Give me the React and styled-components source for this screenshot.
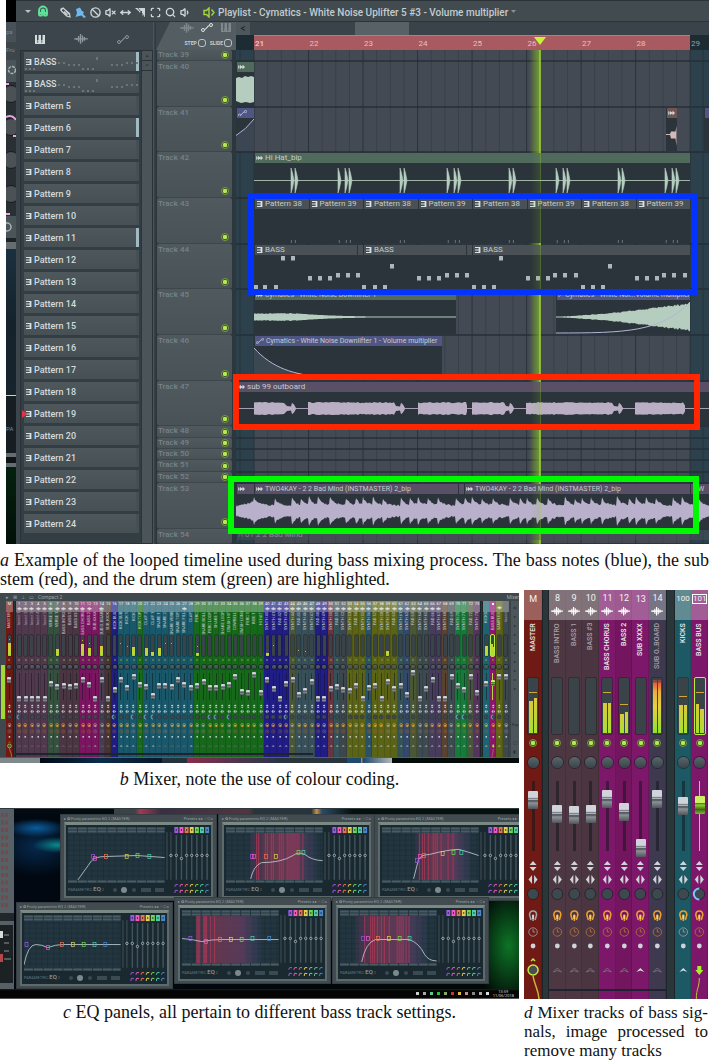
import React from "react";
import styled, { createGlobalStyle } from "styled-components";
import {
  Magnet,
  Ban,
  VolumeX,
  MoveHorizontal,
  Scan,
  Search,
  Volume1,
} from "lucide-react";

const GlobalStyle = createGlobalStyle`
  * { box-sizing: border-box; }
  body { margin: 0; background: #fff; overflow-x: hidden; }
  button, input { margin: 0; padding: 0; border: 0; background: none; font: inherit; color: inherit; }
  svg { display: block; }
  figure { margin: 0; }
`;

const Page = styled.main`
  font-family: Roboto, "Liberation Sans", sans-serif;
  color: #d5dde0;
`;

const Caption = styled.figcaption`
  font-family: "Liberation Serif", serif;
  font-size: ${(p) => p.$size || 18}px;
  line-height: ${(p) => p.$line || 19}px;
  color: #111;
  margin-top: ${(p) => p.$top}px;
  text-align: ${(p) => (p.$center ? "center" : "left")};
`;

const Line = styled.span`
  display: block;
  white-space: nowrap;
  text-align-last: ${(p) => (p.$fill ? "justify" : "left")};
`;

/* ---------- playlist ---------- */

const Playlist = styled.div`
  display: grid;
  grid-template-columns: 10px 1fr;
  height: 544px;
  margin-left: 6px;
  overflow: hidden;
`;

const Sliver = styled.div`
  display: flex;
  flex-direction: column;
  background: #14202a;
  overflow: hidden;
  font-size: 6px;
  color: #7d878c;
`;

const SliverBlock = styled.div`
  flex: 0 0 auto;
  height: ${(p) => p.$h}px;
  background: ${(p) => p.$bg};
  padding: ${(p) => p.$pad || 0}px 0 0;
  overflow: hidden;
`;

const Window = styled.section`
  display: flex;
  flex-direction: column;
  min-width: 0;
  background: #3b454b;
`;

const Toolbar = styled.header`
  display: flex;
  align-items: center;
  height: 22px;
  padding: 2px 0 0 4px;
  background: #414b50;
  border-top: 1px solid #2b3338;
  border-bottom: 1px solid #2b3439;
  white-space: nowrap;
`;

const ToolButton = styled.button`
  display: flex;
  align-items: center;
  justify-content: center;
  width: 15px;
  height: 15px;
  color: ${(p) => p.$color || "#cfd6d8"};
  margin-left: ${(p) => p.$gap || 0}px;
`;

const WindowTitle = styled.h1`
  margin: 0 3px 0 2px;
  font-size: 10px;
  font-weight: 500;
  color: #c3cccf;
`;

const Body = styled.div`
  flex: 1;
  display: grid;
  grid-template-columns: 137px 3px 80px 1fr;
  min-height: 0;
`;

const Browser = styled.aside`
  display: flex;
  flex-direction: column;
  padding-left: 4px;
  min-height: 0;
`;

const BrowserTabs = styled.div`
  display: flex;
  align-items: center;
  justify-content: space-around;
  height: 28px;
  padding: 6px 10px 0 0;
`;

const BrowserBody = styled.div`
  display: grid;
  grid-template-columns: 1fr 11px;
  background: #333d44;
  border: 1px solid #2a3238;
  height: 494px;
`;

const PatternList = styled.ul`
  list-style: none;
  margin: 0;
  padding: 1px 2px 0 3px;
  display: flex;
  flex-direction: column;
  gap: 3px;
  overflow: hidden;
`;

const PatternItem = styled.li`
  flex: 0 0 19px;
  display: flex;
  align-items: center;
  position: relative;
  gap: 2px;
  padding-left: 1px;
  font-size: 9px;
  font-weight: 500;
  color: #d3dbde;
  background: linear-gradient(#4d575c, #465055);
  border-right: 3px solid ${(p) => (p.$marked ? "#a3b9c2" : "#454f54")};
`;

const MiniNotes = styled.svg`
  position: absolute;
  inset: 0;
`;

const Current = styled.span`
  position: absolute;
  left: -2px;
  top: 6px;
  border-left: 5px solid #e0334a;
  border-top: 4px solid transparent;
  border-bottom: 4px solid transparent;
`;

const Scroll = styled.div`
  background: #4a5459;
  border-left: 1px solid #2b3439;
  display: flex;
  flex-direction: column;
`;

const ScrollButton = styled.button`
  height: 10px;
  font-size: 6px;
  line-height: 8px;
  color: #1f272b;
  border-bottom: 1px solid #2b3439;
`;

const Divider = styled.div`
  background: linear-gradient(90deg, #4a5459 33%, #252e34 66%, #3b454b);
`;

const Heads = styled.div`
  display: flex;
  flex-direction: column;
  background: #2b363d;
  min-height: 0;
`;

const HeadTop = styled.div`
  background: #3b454b;
`;

const HeadTools = styled.div`
  height: 28px;
  background: #535d62;
  clip-path: polygon(0 100%, 14px 0, 100% 0, 100% 100%);
  display: flex;
  flex-direction: column;
  justify-content: space-between;
  align-items: flex-end;
  padding: 1px 4px 3px 0;
`;

const IconRow = styled.div`
  display: flex;
  gap: 7px;
`;

const Toggle = styled.label`
  display: flex;
  align-items: center;
  gap: 1px;
  font-size: 5px;
  font-weight: 700;
  color: #c7cfd2;
  input {
    appearance: none;
    width: 8px;
    height: 8px;
    border: 1px solid #b9c2c6;
    border-radius: 3px;
  }
`;

const ToggleRow = styled.div`
  display: flex;
  gap: 4px;
`;

const TrackHead = styled.div`
  flex: 0 0 auto;
  display: flex;
  justify-content: space-between;
  height: ${(p) => p.$h}px;
  margin: 0 4px 0 1px;
  padding: ${(p) => (p.$h > 14 ? 1 : 0)}px 3px ${(p) => (p.$h > 14 ? 2 : 1)}px 1px;
  background: linear-gradient(#50595e, #485257);
  border-bottom: 1px solid #3c464b;
  border-radius: 2px;
  color: #798286;
  font-size: 8px;
  font-weight: 500;
  line-height: 10px;
`;

const Led = styled.button`
  align-self: ${(p) => p.$align || "flex-end"};
  width: ${(p) => p.$size || 8}px;
  height: ${(p) => p.$size || 8}px;
  border-radius: 50%;
  border: 1px solid #7a9a3c;
  background: radial-gradient(#b4e85a 45%, #3a5020 60%);
`;

const Timeline = styled.div`
  display: flex;
  flex-direction: column;
  min-width: 0;
`;

const TimeScroll = styled.div`
  display: grid;
  grid-template-columns: 14fr 105fr 54fr 300fr;
  height: 13px;
  background: #3a4349;
`;

const TimeBack = styled.button`
  background: #4d575c;
  font-size: 10px;
  line-height: 10px;
  color: #1e2529;
`;

const TimeThumb = styled.div`
  grid-column: 3;
  background: #576166;
`;

const Ruler = styled.div`
  display: grid;
  grid-template-columns: 36fr repeat(8, minmax(0, 109fr)) minmax(0, 38fr);
  height: 15px;
  background: #1d2b33;
  font-size: 8px;
  line-height: 15px;
  position: relative;
`;

const RulerBar = styled.span`
  background: ${(p) => (p.$last ? "none" : "#a95a60")};
  border-top: 1px solid ${(p) => (p.$last ? "#1d2b33" : "#c0777a")};
  color: ${(p) => (p.$last ? "#93a0a6" : "#e3c0c0")};
  padding-left: 1px;
  &:nth-child(2) { font-weight: 700; }
`;

const Marker = styled.span`
  position: absolute;
  left: 63%;
  top: 2px;
  border-top: 8px solid #c4f43c;
  border-left: 6px solid transparent;
  border-right: 6px solid transparent;
`;

const Lanes = styled.div`
  position: relative;
  display: flex;
  flex-direction: column;
`;

const Backdrop = styled.svg`
  position: absolute;
  inset: 0;
  width: 100%;
  height: 100%;
`;

const Playhead = styled.div`
  position: absolute;
  top: 0;
  bottom: 0;
  right: 35.6%;
  width: 10px;
  background: linear-gradient(90deg, transparent, rgba(130, 190, 30, 0.16));
  border-right: 1px solid rgba(160, 220, 40, 0.3);
`;

const Lane = styled.div`
  flex: 0 0 auto;
  position: relative;
  height: ${(p) => p.$h}px;
  display: grid;
  grid-template-columns: ${(p) => p.$cols || "1fr"};
  padding: 1px 0;
`;

const Clip = styled.div`
  grid-column: ${(p) => p.$col};
  display: flex;
  flex-direction: column;
  min-width: 0;
  overflow: hidden;
  background: ${(p) => (p.$ghost ? "none" : "#2b343a")};
`;

const tones = {
  green: "#506a5c",
  blue: "#505684",
  plum: "#594f66",
  grey: "#4a5156",
  brown: "#715553",
};

const ClipBar = styled.div`
  flex: 0 0 10px;
  display: flex;
  align-items: center;
  gap: 2px;
  min-width: 0;
  height: 10px;
  padding-left: 1px;
  background: ${(p) => tones[p.$tone]};
  border-left: 1px solid #2b343a;
  font-size: ${(p) => (p.$small ? 7 : 8)}px;
  line-height: 10px;
  white-space: nowrap;
  color: #c3cdcb;
`;

const ClipArt = styled.svg`
  width: 100%;
  flex: 1;
  min-height: 0;
`;

const Highlight = styled.div`
  position: absolute;
  border: 6px solid ${(p) => p.$color};
  left: ${(p) => p.$left}px;
  right: ${(p) => p.$right}px;
  top: ${(p) => p.$top}px;
  height: ${(p) => p.$h}px;
  z-index: 3;
`;

const PatternIcon = () => (
  <svg width="7" height="8" viewBox="0 0 7 8" stroke="#d9e2e5" fill="none">
    <path d="M1 1.500H6M1 4H6M1 6.500H6" strokeWidth="1.100" />
    <path d="M5.500 1V7" strokeWidth="1.800" />
  </svg>
);

const PianoIcon = ({ color = "#d5dcdf" }) => (
  <svg width="12" height="9" viewBox="0 0 12 9">
    <path d="M1 0H3V5H4.500V0H7V5H8.500V0H11V9H1Z" fill={color} />
    <path d="M3.700 5V8M7.800 5V8" stroke="#3b454b" strokeWidth="0.7" />
  </svg>
);

const WaveIcon = ({ color = "#8d969a", size = 14 }) => (
  <svg width={size} height={size * 0.7} viewBox="0 0 14 10">
    <path d="M0 5H14M2.500 4V6M4.500 2V8M6.500 0V10M8.500 1.500V8.500M10.500 3V7" stroke={color} strokeWidth="1.4" />
  </svg>
);

const CurveIcon = ({ color = "#8d969a", width = 12 }) => (
  <svg width={width} height={width * 0.75} viewBox="0 0 12 9" fill="none" stroke={color}>
    <circle cx="2" cy="7" r="1.500" />
    <circle cx="10" cy="2" r="1.500" />
    <path d="M3.500 6.500C6 6 6 3 8.500 2.500" strokeWidth="1.2" />
  </svg>
);

const AudioIcon = () => (
  <svg width="7" height="6" viewBox="0 0 8 6">
    <path d="M0.500 1V5M2.500 1.200L4.500 3L2.500 4.800ZM5.500 1.200L7.500 3L5.500 4.800ZM0.500 3H7" stroke="#d9e2e5" strokeWidth="0.8" fill="#d9e2e5" />
  </svg>
);

const PencilTool = () => (
  <svg width="11" height="11" viewBox="0 0 11 11" fill="none" stroke="#cfd6d8" strokeWidth="1.2">
    <path d="M1 2L3 1L9.500 6.500L10 10L6.500 9L1 3.500ZM3 1L1 3.500M4 4.500L7.500 8M5.500 3.500L9 7" />
  </svg>
);

const BrushTool = () => (
  <svg width="11" height="11" viewBox="0 0 11 11">
    <path d="M1 2L5 0.500L7 4L9 5L8 7L11 10L9 11L6.500 8.500L4 9L0.500 10L2 6Z" fill="#6cb8f0" />
  </svg>
);

const SliceTool = () => (
  <svg width="11" height="11" viewBox="0 0 11 11">
    <path d="M0 1H10V10L7 8V4H6L5 6L4 4.500Z" fill="#cfd6d8" />
    <path d="M3 1L9 9" stroke="#414b50" strokeWidth="0.8" />
  </svg>
);

const SpeakerTool = () => (
  <svg width="12" height="11" viewBox="0 0 12 11" fill="none" stroke="#a4d83a" strokeWidth="1.400">
    <path d="M1 3.500H3.500L6 1V10L3.500 7.500H1ZM8.500 2.500L11 5.500L8.500 8.500" />
  </svg>
);

const LucideTool = ({ icon: Icon }) => <Icon size={11} strokeWidth={3} />;

const tools = [
  ["Draw", <PencilTool />],
  ["Paint", <BrushTool />],
  ["Delete", <LucideTool icon={Ban} />],
  ["Mute", <LucideTool icon={VolumeX} />],
  ["Slip", <LucideTool icon={MoveHorizontal} />],
  ["Slice", <SliceTool />],
  ["Select", <LucideTool icon={Scan} />],
  ["Zoom", <LucideTool icon={Search} />],
  ["Playback", <LucideTool icon={Volume1} />],
];

const patterns = ["BASS", "BASS"];
for (let n = 5; n <= 24; n++) patterns.push(`Pattern ${n}`);
const marked = [0, 3, 8];

const tracks = [
  [39, 11], [40, 46], [41, 45], [42, 46], [43, 46], [44, 45], [45, 46], [46, 46], [47, 45],
  [48, 12], [49, 11], [50, 11], [51, 12], [52, 11], [53, 46], [54, 15],
];

// turns a list of amplitudes into a mirrored outline
const outline = (points, mid) => {
  const top = points.map(([x, a]) => `${x} ${(mid - a).toFixed(1)}`);
  const bottom = points.map(([x, a]) => `${x} ${(mid + a).toFixed(1)}`).reverse();
  return `M${top.concat(bottom).join("L")}Z`;
};

const noise = (i) => Math.abs(Math.sin(i * 12.9898) * 43758.5453) % 1;

const hats = [0, 109, 218, 327].flatMap((b) => [37, 41, 84, 91, 95].map((x) => x + b));

const subBlocks = [[18, 49, 60], [72, 158, 169], [182, 230, 230], [236, 268, 278], [290, 376, 387], [399, 448, 448]];
const subPath = subBlocks
  .map(([a, b, tail]) => {
    const pts = [];
    for (let x = a; x <= b; x += 2) pts.push([x, 5.5 + noise(x) * 1.3]);
    if (tail > b) pts.push([b + 2, 2.5], [tail - 5, 2], [tail - 4, 6], [tail - 2, 4], [tail, 0.5]);
    else pts.push([b + 1, 3]);
    return outline(pts, 17);
  })
  .join("");

const kicks = [
  18, 39, 56, 65, 73, 82, 94, 110, 120, 127, 137, 147, 165, 174, 182, 192, 202, 220, 229, 236, 246,
  257, 274, 284, 291, 301, 312, 329, 339, 346, 355, 366, 381, 393, 400, 410, 420, 437, 446, 462,
];
const drumPoints = [];
for (let x = 0; x <= 473; x++) {
  const last = kicks.filter((k) => k <= x).pop();
  if (last === undefined) {
    drumPoints.push([x, 4 + x / 4 + noise(x) * 2]);
  } else {
    const since = x - last;
    const big = 12 + noise(last) * 3;
    drumPoints.push([x, since < 1 ? big : 3 + noise(x) * 2 + (big * 0.7) / (1 + since * 0.3)]);
  }
}

const notes = [
  [2, 42], [11, 42], [22, 42], [29, 13], [39, 13], [56, 33], [66, 33], [76, 33], [84, 30], [94, 30], [104, 30],
  [110, 42], [121, 42], [131, 42], [138, 21], [165, 33], [175, 33], [185, 33], [193, 30], [203, 30], [213, 30],
  [220, 42], [230, 42], [240, 42], [247, 13], [274, 33], [284, 33], [294, 33], [301, 30], [311, 30], [322, 30],
  [329, 42], [339, 42], [349, 42], [356, 21], [383, 33], [393, 33], [403, 33], [410, 30], [420, 30], [431, 30],
];

const swell = [];
for (let x = 0; x <= 134; x += 1) swell.push([x, 0.4 + Math.pow(x / 134, 1.5) * 12 + noise(x) * (x / 60)]);
const fall = [];
for (let x = 0; x <= 202; x += 1) {
  const a = x < 45 ? 3 + noise(x) : Math.max(0.4, 3.4 * Math.exp(-(x - 45) / 40));
  fall.push([x, a]);
}

const laneLines = [];
tracks.reduce((y, [, h]) => {
  laneLines.push(y + h);
  return y + h;
}, 0);

const Art = ({ w, h, children }) => (
  <ClipArt viewBox={`0 0 ${w} ${h}`} preserveAspectRatio="none">
    {children}
  </ClipArt>
);

const BackdropArt = () => (
  <Backdrop viewBox="0 0 473 494" preserveAspectRatio="none">
    <defs>
      <linearGradient id="glow">
        <stop offset="0" stopColor="#8ac020" stopOpacity="0" />
        <stop offset="1" stopColor="#8ac020" stopOpacity="0.65" />
      </linearGradient>
    </defs>
    <rect width="473" height="494" fill="#2c414c" />
    <rect x="18" width="436" height="494" fill="#434a54" />
    {[...Array(33)].map((_, i) => (
      <path
        key={i}
        d={`M${18 + i * 13.63} 0V494`}
        stroke={i % 4 === 0 ? "#2a333c" : "#384049"}
        strokeWidth="1"
      />
    ))}
    <path d="M4 0V494M467 0V494" stroke="#24363f" />
    {laneLines.map((y) => (
      <path key={y} d={`M0 ${y}H473`} stroke="#262f37" strokeWidth="1.3" />
    ))}
    <rect x="293" width="11" height="494" fill="url(#glow)" />
    <path d="M304 0V494" stroke="#a8e03c" strokeWidth="1.3" />
  </Backdrop>
);

const laneContent = {
  40: {
    cols: "18fr 455fr",
    body: (
      <Clip>
        <ClipBar $tone="green"><AudioIcon /></ClipBar>
        <Art w={18} h={34}><path d="M0 6L3 5L6 6L9 4L12 5L15 4L18 5V30L14 31L10 30L5 31L0 29Z" fill="#b4cdbf" /></Art>
      </Clip>
    ),
  },
  41: {
    cols: "18fr 412fr 11fr 27fr 5fr",
    body: (
      <>
        <Clip>
          <ClipBar $tone="blue"><CurveIcon color="#c9cdea" width={9} /></ClipBar>
          <Art w={18} h={34}><path d="M0 18Q10 12 18 1V34H0Z" fill="#3b4652" /><path d="M0 18Q10 12 18 1" stroke="#b2b6d8" fill="none" /></Art>
        </Clip>
        <Clip $col={3}>
          <ClipBar $tone="brown"><AudioIcon /></ClipBar>
          <Art w={11} h={34}><path d="M0 16.500H4L5 14H9.500L10.500 8V29L9.500 21H5L4 17.500H0Z" fill="#d3bab8" /></Art>
        </Clip>
        <Clip $col={5}><ClipBar $tone="blue" /></Clip>
      </>
    ),
  },
  42: {
    cols: "18fr 436fr 19fr",
    body: (
      <Clip $col={2}>
        <ClipBar $tone="green"><AudioIcon />Hi Hat_bip</ClipBar>
        <Art w={436} h={34}>
          <path d="M0 17.500H436" stroke="#9fb5a8" />
          {hats.map((x) => (
            <path key={x} d={`M${x} 5L${x + 1.5} 10L${x + 3} 17.500L${x + 1.5} 25L${x} 30Z`} fill="#b4cdbf" stroke="#b4cdbf" strokeWidth="0.6" />
          ))}
        </Art>
      </Clip>
    ),
  },
  43: {
    cols: "36fr repeat(8, minmax(0, 109fr)) 38fr",
    body: [...Array(8)].map((_, i) => (
      <Clip key={i} $col={i + 2}>
        <ClipBar $tone="grey"><PatternIcon />Pattern {i % 2 ? 39 : 38}</ClipBar>
        <Art w={54} h={34}><path d={i % 2 ? "M30 31V34M37 31V34M41 31V34" : "M37 31V34M41 31V34"} stroke="#68727a" /></Art>
      </Clip>
    )),
  },
  45: {
    cols: "18fr 202fr 100fr 134fr 19fr",
    body: (
      <>
        <Clip $col={2}>
          <ClipBar $tone="green" $small><AudioIcon />Cymatics - White Noise Downlifter 1</ClipBar>
          <Art w={202} h={34}><path d={outline(fall, 17)} fill="#b4cdbf" /></Art>
        </Clip>
        <Clip $col={4}>
          <ClipBar $tone="blue" $small><CurveIcon color="#c9cdea" width={6} />Cymatics - White Noi...Volume multiplier</ClipBar>
          <Art w={134} h={34}>
            <path d={outline(swell, 17)} fill="#b4cdbf" />
            <path d="M0 33C70 33 105 32 134 2" stroke="#b2b6d8" fill="none" />
          </Art>
        </Clip>
      </>
    ),
  },
  46: {
    cols: "18fr 188fr 267fr",
    body: (
      <Clip $col={2}>
        <ClipBar $tone="blue" $small><CurveIcon color="#c9cdea" width={8} />Cymatics - White Noise Downlifter 1 - Volume multiplier</ClipBar>
        <Art w={188} h={34}>
          <path d="M0 2C18 22 40 29 70 31H0Z" fill="#3b4852" />
          <path d="M0 2C18 22 40 29 70 31" stroke="#b2b6d8" fill="none" />
        </Art>
      </Clip>
    ),
  },
  47: {
    cols: "1fr",
    body: (
      <Clip>
        <ClipBar $tone="plum"><AudioIcon />sub 99 outboard</ClipBar>
        <Art w={473} h={34}>
          <path d="M0 17H473" stroke="#a99fb5" />
          <path d={subPath} fill="#b9aec4" />
        </Art>
      </Clip>
    ),
  },
};

const BassLane = styled.div`
  grid-column: 2;
  display: flex;
  flex-direction: column;
  background: #2b343a;
`;

const BarRow = styled.div`
  display: grid;
  grid-template-columns: ${(p) => p.$cols};
`;

const LaneFor = ({ id, h }) => {
  if (id === 44) {
    return (
      <Lane $h={h} $cols="18fr 436fr 19fr">
        <BassLane>
          <BarRow $cols="103fr 6fr 103fr 6fr 218fr">
            <ClipBar $tone="grey"><PatternIcon />BASS</ClipBar>
            <ClipBar $tone="grey" />
            <ClipBar $tone="grey"><PatternIcon />BASS</ClipBar>
            <ClipBar $tone="grey" />
            <ClipBar $tone="grey"><PatternIcon />BASS</ClipBar>
          </BarRow>
          <Art w={436} h={34}>
            {notes.map(([x, y]) => (
              <rect key={x} x={x - 2} y={y - 12} width="4" height="4.500" fill="#aeb6ba" />
            ))}
          </Art>
        </BassLane>
      </Lane>
    );
  }
  if (id === 53) {
    return (
      <Lane $h={h}>
        <Clip>
          <BarRow $cols="minmax(0, 18fr) minmax(0, 204fr) 6fr minmax(0, 226fr) minmax(0, 19fr)">
            <ClipBar $tone="plum"><AudioIcon /></ClipBar>
            <ClipBar $tone="plum" $small><AudioIcon />TWO4KAY - 2 2 Bad Mind (INSTMASTER) 2_bip</ClipBar>
            <ClipBar $tone="plum" />
            <ClipBar $tone="plum" $small><AudioIcon />TWO4KAY - 2 2 Bad Mind (INSTMASTER) 2_bip</ClipBar>
            <ClipBar $tone="plum" $small>&nbsp;TW</ClipBar>
          </BarRow>
          <Art w={473} h={34}><path d={outline(drumPoints, 17)} fill="#b9b0cb" /></Art>
        </Clip>
      </Lane>
    );
  }
  if (id === 54) {
    return (
      <Lane $h={h}>
        <Clip $ghost style={{ opacity: 0.5 }}>
          <ClipBar $tone="grey">⚻ 01 2 2 Bad Mind</ClipBar>
        </Clip>
      </Lane>
    );
  }
  const lane = laneContent[id];
  return <Lane $h={h} $cols={lane && lane.cols}>{lane && lane.body}</Lane>;
};

const PlaylistWindow = () => (
  <Playlist>
    <Sliver>
      <SliverBlock $h={22} $bg="#000" />
      <SliverBlock $h={20} $bg="#475157" $pad={6}>pa</SliverBlock>
      <SliverBlock $h={18} $bg="#3c464b" $pad={4}>Fru</SliverBlock>
      <SliverBlock $h={22} $bg="#4a555a" $pad={5}>
        <svg width="10" height="10"><circle cx="6" cy="5" r="3.500" fill="none" stroke="#aab2b5" strokeWidth="1.500" strokeDasharray="3 1" /></svg>
      </SliverBlock>
      <SliverBlock $h={134} $bg="#2a2f33">
        <svg width="10" height="134" fill="#4b5155">
          {[12, 45, 78, 112].map((y) => <circle key={y} cx="5" cy={y} r="8.500" stroke="#171b1e" />)}
          <path d="M0 2H3M0 35Q6 32 10 38M7 54H10M0 132H4" stroke="#e9a6e0" strokeWidth="2" fill="none" />
        </svg>
      </SliverBlock>
      <SliverBlock $h={22} $bg="#4a555a" $pad={5}>
        <svg width="10" height="12"><circle cx="1" cy="6" r="4" fill="none" stroke="#aab2b5" strokeWidth="1.500" /></svg>
      </SliverBlock>
      <SliverBlock $h={4} $bg="#1c2226" />
      <SliverBlock $h={7} $bg="#666d70" />
      <SliverBlock $h={146} $bg="linear-gradient(#1b303e, #14222c 50%, #18242c)" />
      <SliverBlock $h={1} $bg="#ccd" />
      <SliverBlock $h={57} $bg="#171e23" $pad={29}>PA</SliverBlock>
      <SliverBlock $h={4} $bg="#666d70" />
      <SliverBlock $h={6} $bg="#101416" />
      <SliverBlock $h={4} $bg="#666d70" />
      <SliverBlock $h={90} $bg="linear-gradient(#04200f, #020d07)" />
    </Sliver>
    <Window>
      <Toolbar>
        <ToolButton aria-label="Menu">
          <svg width="6" height="4"><path d="M0 0H6L3 3Z" fill="#b9c2c5" /></svg>
        </ToolButton>
        <ToolButton $color="#5fe39a" aria-label="Snap">
          <Magnet size={12} strokeWidth={4} style={{ rotate: "135deg", scale: "-1" }} />
        </ToolButton>
        {tools.map(([label, icon], i) => (
          <ToolButton key={label} $gap={i === 0 ? 8 : 0} aria-label={label}>{icon}</ToolButton>
        ))}
        <ToolButton $gap={8} aria-label="Preview"><SpeakerTool /></ToolButton>
        <WindowTitle>Playlist - Cymatics - White Noise Uplifter 5 #3 - Volume multiplier</WindowTitle>
        <svg width="5" height="4"><path d="M0 0H5L2.500 3Z" fill="#87918f" /></svg>
      </Toolbar>
      <Body>
        <Browser>
          <BrowserTabs>
            <PianoIcon /><WaveIcon /><CurveIcon />
          </BrowserTabs>
          <BrowserBody>
            <PatternList>
              {patterns.map((name, i) => (
                <PatternItem key={i} $marked={marked.includes(i)}>
                  {i < 2 && (
                    <MiniNotes width="114" height="19" fill="#6b757a">
                      {[1, 5, 9, 29, 34, 39, 44, 49, 54, 58, 63, 68, 87, 92, 97, 102, 107, 112].map((x, n) => (
                        <rect key={x} x={x} y={n < 3 || (n > 8 && n < 12) ? 16 : n % 6 > 2 ? 10 : 12} width="2" height="2" />
                      ))}
                      <rect x="72" y="5" width="2" height="3" />
                    </MiniNotes>
                  )}
                  <PatternIcon />
                  {name}
                  {name === "Pattern 19" && <Current />}
                </PatternItem>
              ))}
            </PatternList>
            <Scroll>
              <ScrollButton aria-label="Options">▪</ScrollButton>
              <ScrollButton aria-label="Scroll up">^</ScrollButton>
            </Scroll>
          </BrowserBody>
        </Browser>
        <Divider />
        <Heads>
          <HeadTop>
            <HeadTools>
              <IconRow><WaveIcon color="#7f898d" /><CurveIcon color="#dfe5e7" /><PianoIcon color="#7f898d" /></IconRow>
              <ToggleRow>
                <Toggle>STEP<input type="checkbox" /></Toggle>
                <Toggle>SLIDE<input type="checkbox" /></Toggle>
              </ToggleRow>
            </HeadTools>
          </HeadTop>
          {tracks.map(([id, h]) => (
            <TrackHead key={id} $h={h}>
              Track {id}
              {id !== 54 && <Led aria-label={`Mute track ${id}`} />}
            </TrackHead>
          ))}
        </Heads>
        <Timeline>
          <TimeScroll>
            <TimeBack aria-label="Scroll left">&lt;</TimeBack>
            <TimeThumb />
          </TimeScroll>
          <Ruler>
            <span />
            {[21, 22, 23, 24, 25, 26, 27, 28, 29].map((n) => (
              <RulerBar key={n} $last={n === 29}>{n}</RulerBar>
            ))}
            <Marker />
          </Ruler>
          <Lanes>
            <BackdropArt />
            {tracks.map(([id, h]) => <LaneFor key={id} id={id} h={h} />)}
            <Playhead />
            <Highlight $color="#0433ff" $left={12} $right={11} $top={143} $h={102} />
            <Highlight $color="#ff2600" $left={-3} $right={9} $top={324} $h={56} />
            <Highlight $color="#00f900" $left={-8} $right={10} $top={426} $h={58} />
          </Lanes>
        </Timeline>
      </Body>
    </Window>
  </Playlist>
);

/* ---------- mixer ---------- */

const large = {
  head: 30, name: 58, meter: 56, led: 18, knob: 20, fader: 88, art: 139,
  number: 9, label: 7, meterWidth: 10, meterPad: 1, ledSize: 8, knobSize: 11, cap: 10, capH: 18, wave: 12,
};
const small = {
  head: 11, name: 23, meter: 21, led: 7, knob: 7, fader: 34, art: 53,
  number: 4, label: 4, meterWidth: 3, meterPad: 0, ledSize: 2, knobSize: 4, cap: 4, capH: 6, wave: 5,
};

const Strip = styled.div`
  flex: ${(p) => p.$grow || 1} 1 0;
  min-width: 0;
  display: flex;
  flex-direction: column;
  align-items: center;
  background: ${(p) => p.$bg};
  box-shadow: inset -1px 0 rgba(0, 0, 0, 0.12);
`;

const StripHead = styled.div`
  width: 100%;
  height: ${(p) => p.$s.head}px;
  display: flex;
  flex-direction: column;
  align-items: center;
  justify-content: space-evenly;
  background: rgba(255, 255, 255, 0.3);
  color: #f2f4f5;
  font-size: ${(p) => p.$s.number}px;
  line-height: 1;
`;

const StripNumber = styled.span`
  font-size: ${(p) => (p.$wide ? "8px" : "inherit")};
  outline: ${(p) => (p.$selected ? "1px solid #fff" : "none")};
`;

const StripName = styled.div`
  height: ${(p) => p.$s.name}px;
  padding-bottom: ${(p) => (p.$s.name > 30 ? 3 : 0)}px;
  writing-mode: vertical-rl;
  rotate: 180deg;
  text-align: right;
  white-space: nowrap;
  font-size: ${(p) => p.$s.label}px;
  font-weight: ${(p) => (p.$s.name > 30 ? 500 : 400)};
  line-height: 1;
  color: ${(p) => (p.$dim ? "#a9a0a8" : p.$s.name > 30 ? "#eceff0" : "#c8cdd0")};
`;

const Meter = styled.div`
  position: relative;
  display: flex;
  align-items: flex-end;
  gap: ${(p) => p.$s.meterPad}px;
  width: ${(p) => p.$s.meterWidth}px;
  height: ${(p) => p.$s.meter}px;
  padding: ${(p) => p.$s.meterPad}px;
  background: #3a4347;
  border-radius: 1px;
  outline: ${(p) => (p.$selected ? "1px solid #b6ee3c" : "1px solid rgba(20,25,30,.4)")};
`;

const Level = styled.div`
  flex: 1;
  height: ${(p) => p.$level}%;
  background: ${(p) =>
    p.$level > 90
      ? "linear-gradient(#8a4a40 4%, #e8603c 6%, #f0803c 14%, #e8b040 22%, #e8d040 50%, #90e02c)"
      : "linear-gradient(#dcc83c, #a8e030)"};
`;

const Peak = styled.div`
  position: absolute;
  left: 1px;
  right: 1px;
  bottom: ${(p) => p.$at}%;
  height: 1px;
  background: #d0a83c;
`;

const Cell = styled.div`
  height: ${(p) => p.$h}px;
  display: flex;
  align-items: center;
  justify-content: center;
`;

const Knob = styled.div`
  width: ${(p) => p.$size}px;
  height: ${(p) => p.$size}px;
  border-radius: 50%;
  background: linear-gradient(#5b666b, #39444a);
  box-shadow: 0 0 0 1px rgba(10, 15, 20, 0.45);
`;

const Fader = styled.input`
  appearance: none;
  writing-mode: vertical-lr;
  direction: rtl;
  width: ${(p) => p.$s.cap}px;
  height: ${(p) => p.$s.fader}px;
  background: linear-gradient(${(p) => (p.$selected ? "#b6d83c" : "rgba(15,20,25,.5)")}, ${(p) => (p.$selected ? "#b6d83c" : "rgba(15,20,25,.5)")}) center / ${(p) => (p.$s.cap > 5 && !p.$selected ? 3 : 1)}px 80% no-repeat;
  &::-webkit-slider-thumb {
    appearance: none;
    width: ${(p) => p.$s.cap}px;
    height: ${(p) => p.$s.capH}px;
    border-radius: 1px;
    background: ${(p) =>
      p.$selected
        ? "linear-gradient(#c8f060 38%, #4c7a18 42%, #90d030 50%, #3c6a10 75%, #80b830)"
        : "linear-gradient(#d0d4da 35%, #7b8088 42%, #b4b8be 48%, #43484e 54%, #8d9298 66%, #50555b)"};
  }
`;

const StripSvg = styled.svg`
  width: 100%;
  height: ${(p) => p.$s.art}px;
`;

const StripArt = ({ s, orange, solid, master, selected, blue, clockGrey }) => (
  <StripSvg $s={s} viewBox="0 0 16 139" fill="#cdd3d6">
    <path d="M4.500 5L8 1L11.500 5ZM4.500 7L8 11L11.500 7Z" />
    <path d="M7 15V24L3.500 19.500ZM9 15V24L12.500 19.500Z" />
    <circle cx="8" cy="34" r="5.500" fill="#3d494f" stroke="rgba(10,15,20,.5)" />
    {blue && <path d="M8 28.500A5.500 5.500 0 0 0 8 39.500" stroke="#78c8f8" strokeWidth="2" fill="none" />}
    <g fill="none" stroke={orange ? "#eca028" : "#9fa6aa"} strokeWidth="1.600">
      <path d="M6 60L4.500 55Q4.500 51 8 51Q11.500 51 11.500 55L10 60M8 54.500V61" />
    </g>
    <path d="M7 55H9V59H7Z" fill={orange ? "#ffd070" : "#cdd3d6"} />
    <g fill="none" stroke={orange && !clockGrey ? "#a56a3c" : "#8f8f92"}>
      <circle cx="8" cy="72" r="4.200" />
      <path d="M8 69V72H10" />
    </g>
    <circle cx="8" cy="86" r="2.400" />
    {master && (
      <g fill="none" stroke="#c8e838" strokeWidth="1.500">
        <path d="M6 101L8 99L10 101" />
        <circle cx="8" cy="110" r="5" fill="#454f54" />
        <path d="M8 116C9 124 13 128 14 139" stroke="#c8b838" />
      </g>
    )}
    {selected && (
      <>
        <path d="M6 106H10V110H12L8 115L4 110H6Z" fill="#a8ec30" />
        <path d="M8 118C8 128 5 128 5 139" stroke="#b8c838" fill="none" />
      </>
    )}
    {!master && !selected && (
      <path d="M4 112L8 108L12 112L8 110.500Z" fill={solid ? "#d8dde0" : "none"} stroke={solid ? "none" : "#7a7880"} strokeWidth="0.8" />
    )}
  </StripSvg>
);

const Channel = ({ s, n, name, bg, grow, fader, levels = [0, 0], peak, wave, dim, selected, ...art }) => (
  <Strip $bg={bg} $grow={grow}>
    <StripHead $s={s}>
      <StripNumber $selected={selected} $wide={s === large && String(n).length > 2}>{n}</StripNumber>
      {wave ? <WaveIcon color="#fff" size={s.wave} /> : <Cell $h={s.head / 4} />}
    </StripHead>
    <StripName $s={s} $dim={dim}>{name}</StripName>
    <Meter $s={s} $selected={selected}>
      <Level $level={levels[0]} />
      <Level $level={levels[1]} />
      {peak && <Peak $at={peak} />}
    </Meter>
    <Cell $h={s.led}><Led $size={s.ledSize} $align="center" aria-label={`Mute ${name}`} /></Cell>
    <Cell $h={s.knob}><Knob $size={s.knobSize} /></Cell>
    <Fader type="range" $s={s} $selected={selected} defaultValue={fader} aria-label={`${name} volume`} />
    <StripArt s={s} selected={selected} {...art} />
  </Strip>
);

const MixerFrame = styled.div`
  position: relative;
  display: flex;
  background: #2c373c;
  overflow: hidden;
`;

const Gutter = styled.div`
  flex: 0 0 ${(p) => p.$w}px;
  background: #2a363a;
  border: 1px solid #1c2529;
  border-width: 0 1px;
`;

const StripGroup = styled.div`
  position: relative;
  flex: ${(p) => p.$grow} 1 0;
  min-width: 0;
  display: flex;
`;

const ScrollLine = styled.div`
  position: absolute;
  left: 0;
  right: ${(p) => p.$right || 0};
  bottom: ${(p) => p.$bottom}px;
  height: 2px;
  background: #1f2230;
`;

const bassStrips = [
  { n: 8, name: "BASS INTRO", bg: "#4d3742", fader: 53, wave: true, dim: true },
  { n: 9, name: "BASS 1", bg: "#4d3742", fader: 51, wave: true, dim: true },
  { n: 10, name: "BASS #3", bg: "#4b3540", fader: 53, wave: true, dim: true },
  { n: 11, name: "BASS CHORUS", bg: "#7c1769", fader: 74, wave: true, levels: [55, 56], peak: 73 },
  { n: 12, name: "BASS 2", bg: "#74155f", fader: 56, wave: true, levels: [36, 38], peak: 52 },
  { n: 13, name: "SUB XXXX", bg: "#7c1769", fader: 4, solid: true },
  { n: 14, name: "SUB O..BOARD", bg: "#3f3950", fader: 74, wave: true, dim: true, levels: [99, 99] },
];

const BassMixer = () => (
  <MixerFrame>
    <Channel s={large} n="M" name="MASTER" bg="#701a16" grow={18} fader={73} levels={[60, 64]} peak={74} master />
    <Gutter $w={7} />
    <StripGroup $grow={116}>
      {bassStrips.map((t) => <Channel key={t.n} s={large} orange {...t} />)}
      <ScrollLine $bottom={8} />
    </StripGroup>
    <Gutter $w={9} />
    <StripGroup $grow={33}>
      <Channel s={large} n="100" name="KICKS" bg="#1d5964" fader={64} levels={[52, 52]} peak={66} orange solid clockGrey />
      <Channel s={large} n="101" name="BASS BUS" bg="#7c1769" fader={66} levels={[54, 44]} peak={73} orange selected blue />
    </StripGroup>
  </MixerFrame>
);

// [last track of the run, colour]
const runs = [
  [5, "#50384d"], [7, "#35503f"], [10, "#4b3543"], [13, "#7a165f"], [14, "#493c50"], [15, "#47332f"],
  [16, "#1f1d80"], [19, "#18586a"], [20, "#176a1c"], [28, "#18586a"], [39, "#16691a"], [43, "#201d86"],
  [44, "#4a5734"], [47, "#38505a"], [49, "#201d86"], [50, "#663540"], [51, "#34525a"], [52, "#3c464b"],
  [55, "#5b6316"], [56, "#2b5264"], [60, "#5b6316"], [61, "#34525a"], [62, "#34486c"], [63, "#4a5734"],
  [65, "#3d4b50"], [67, "#473c5c"], [68, "#5a4230"], [69, "#3d4b50"], [71, "#167a3a"], [72, "#46553c"],
  [73, "#53345a"],
];
const faders = [
  7, 7, 7, 7, 7, 61, 51, 52, 51, 52, 74, 56, 7, 74, 7, 39, 75, 46, 85, 56, 51, 18, 52, 52, 49, 76, 58,
  45, 54, 67, 45, 45, 51, 58, 85, 33, 27, 92, 27, 75, 42, 7, 62, 74, 23, 35, 69, 7, 7, 42, 50, 39, 36,
  54, 7, 46, 54, 7, 67, 43, 54, 20, 100, 7, 44, 75, 7, 7, 85, 52, 39, 85, 27,
];
const names = {
  6: "VERSE 5", 7: "VERSE 1", 8: "BASS INTRO", 9: "BASS 1", 10: "BASS #3", 11: "BASS CHORUS", 12: "BASS 2",
  13: "SUB XXXX", 14: "SUB O..BOARD", 15: "SUB_KICK", 16: "KICK BUS", 17: "KICK SUB", 18: "KICK 1", 19: "KICK",
  20: "KICK TOP", 21: "CLAP 2", 22: "CLAP 1", 23: "SNARE 1", 24: "SNARE 2", 25: "SNARE VERB", 26: "SNARE TOP",
  27: "SNARE FILL", 28: "CLAP", 29: "PERC", 30: "SNARE ROLL", 31: "PERC LOOP", 32: "SHAKE 1", 33: "SHAKE LOOP",
  34: "CRASH HIT", 35: "COWBELL", 36: "CRASH LONG", 37: "PERC 1", 38: "RIDE 1", 39: "HI HAT",
};
const levelOf = {
  7: 35, 11: 55, 12: 40, 14: 50, 19: 45, 21: 40, 22: 20, 23: 40, 29: 15, 40: 15, 59: 22,
};
const peakOf = { 11: 72, 12: 55, 17: 58, 18: 45, 24: 55, 25: 58, 29: 45, 41: 50, 45: 25, 46: 18 };
const solids = [7, 13, 16, 17, 18, 19, 21, 22, 28];
const fullStrips = faders.map((fader, i) => {
  const n = i + 1;
  const level = levelOf[n] || 0;
  return {
    n,
    fader,
    name: names[n] || (n < 6 ? `Insert ${n}` : n % 3 ? `SYNTH ${n}` : `PAD ${n}`),
    bg: runs.find(([last]) => n <= last)[1],
    levels: [level, level],
    peak: peakOf[n],
    wave: n < 13 || n === 14 || n === 27 || (n > 39 && n < 68),
    dim: n < 6,
    solid: solids.includes(n) || n > 39,
    orange: n % 5 !== 4 && n !== 13 && n !== 30,
    blue: [1, 16, 19, 21, 22, 31, 32, 34, 43, 70, 71].includes(n),
  };
});

const FullFrame = styled.div`
  margin-top: 3px;
  background: #3e484d;
  overflow: hidden;
`;

const FullTop = styled.div`
  display: flex;
  align-items: center;
  gap: 4px;
  height: 8px;
  padding-left: 6px;
  font-size: 5px;
  line-height: 8px;
  color: #9aa6aa;
  span:last-child { margin-left: auto; }
`;

const Output = styled.div`
  flex: 0 0 6px;
  background: linear-gradient(0deg, #3e484d 24%, #a2d83a 24%, #a2d83a 59%, #3e484d 59%);
  border: 1px solid #3e484d;
`;

const SidePanel = styled.div`
  flex: 0 0 10px;
  padding-top: 2px;
  text-align: center;
  background: #4c565b;
  border-left: 2px solid #3a4449;
  color: #222b30;
  font-size: 4px;
  line-height: 9px;
`;

const DesktopEdge = styled.div`
  display: grid;
  grid-template-columns: 40fr 122fr 25fr 90fr 70fr 45fr 127fr;
  height: 6px;
  border-top: 1px solid #555f63;
  > div:nth-child(1) { background: #7f888a; }
  > div:nth-child(2) { background: linear-gradient(90deg, #020a14, #0a2c4c, #06182c); }
  > div:nth-child(3) { background: #22333c; }
  > div:nth-child(4) { background: linear-gradient(90deg, #8a2c48, #54334e, #2a3348); }
  > div:nth-child(5) { background: #28343c; }
  > div:nth-child(6) { background: linear-gradient(90deg, #1f4a70 30%, #d08a3a 32%, #20486c 36%, #b4b8b8); }
  > div:nth-child(7) { background: #040c09; }
`;

const FullMixer = () => (
  <FullFrame>
    <FullTop><span>▸</span><span>⊞</span><span>⊥</span><span>▭</span><span>Compact 2</span><span>Mixer</span></FullTop>
    <MixerFrame>
      <Output />
      <Channel s={small} n="M" name="MASTER" bg="#701a16" grow={7} fader={74} levels={[60, 64]} peak={74} master />
      <Gutter $w={3} />
      <StripGroup $grow={466}>
        {fullStrips.map((t) => <Channel key={t.n} s={small} {...t} />)}
        <ScrollLine $bottom={2} $right="36%" />
      </StripGroup>
      <Gutter $w={3} />
      <StripGroup $grow={26}>
        <Channel s={small} n="" name="KICKS" bg="#1d6470" fader={61} levels={[50, 50]} orange solid />
        <Channel s={small} n="" name="BASS BUS" bg="#8a176c" fader={65} levels={[55, 45]} orange selected blue />
        <Channel s={small} n="" name="SAMPLES" bg="#5b6316" fader={85} orange solid wave />
        <Channel s={small} n="" name="Insert" bg="#3d484d" fader={85} dim />
      </StripGroup>
      <SidePanel>◂)<br />▸<br />▸<br />▸<br />▸<br />▸<br />▸<br />▸<br />▸<br />▸<br /><br /><br /><br />Fxp<br /><br />◯<br />◧</SidePanel>
    </MixerFrame>
    <DesktopEdge>{[...Array(7)].map((_, i) => <div key={i} />)}</DesktopEdge>
  </FullFrame>
);

/* ---------- eq panels ---------- */

const Desktop = styled.div`
  position: relative;
  height: 191px;
  margin-top: 19px;
  overflow: hidden;
  border-top: 1px solid #30393e;
  background:
    linear-gradient(90deg, #030a10 22%, #3a4348 22%, #3a4348 26%, #a83850 27%, #3a2f44 31%, #55343f 48%, #28343c 49%, #28343c 60%, #c89040 61%, #2a4c68 62%, #04100a 68%) 0 0 / 100% 5px no-repeat,
    radial-gradient(ellipse 34px 60px at 98% 72%, #0d7426, transparent),
    radial-gradient(ellipse 30px 9px at 7% 10%, #0b5c9c, transparent),
    radial-gradient(ellipse 24px 8px at 11% 19%, #0a8a90, transparent),
    radial-gradient(ellipse 44px 30px at 7% 20%, #06284c, transparent),
    linear-gradient(90deg, #010812, #020806);
`;

const Rack = styled.div`
  width: 14px;
  height: 180px;
  background: #566065;
`;

const EqFrame = styled.div`
  position: absolute;
  left: ${(p) => p.$x}px;
  top: ${(p) => p.$y}px;
  width: 157px;
  height: 87px;
  padding: 0 3px 2px;
  display: flex;
  flex-direction: column;
  background: #414b50;
  border: 1px solid #343d42;
`;

const EqTitle = styled.div`
  display: flex;
  justify-content: space-between;
  font-size: 4px;
  line-height: 7px;
  color: #95a1a6;
`;

const EqPanel = styled.div`
  flex: 1;
  display: grid;
  grid-template-columns: 98fr 46fr;
  grid-template-rows: 56fr 13fr;
  padding: 2px 1px 0 2px;
  background: #1a2830;
  border: 2px solid #5c6a6b;
  border-top: 3px solid #7b8985;
  min-height: 0;
`;

const EqSvg = styled.svg`
  width: 100%;
  height: 100%;
  min-height: 0;
`;

const EqSide = styled(EqSvg)`
  grid-column: 2;
  grid-row: 1 / 3;
`;

const EqFoot = styled.div`
  display: flex;
  align-items: center;
  justify-content: space-between;
  font-size: 4px;
  line-height: 10px;
  white-space: nowrap;
  color: #64757d;
  b { color: #8f9ea4; font-size: 6px; font-weight: 500; }
`;

const bands = ["#9a58e6", "#ee5cc0", "#ee7050", "#dfd250", "#72d850", "#4fcfa8", "#4a88cc"];

const eqs = [
  { x: 16, y: 93, nodes: [[2, 29], [24, 32], [38, 29], [49, 29], [60, 29], [71, 29], [82, 29]], curve: "M0 49Q4 29 12 29Q18 29 24 32Q32 29 40 29H98" },
  { x: 60, y: 5, nodes: [[25, 29], [27, 31], [38, 29], [59, 29], [70, 28], [82, 29]], curve: "M10 52L24 33Q28 29 38 29L70 28L98 30" },
  { x: 218, y: 5, heat: [24, 92, [31, 33, 40, 42, 46, 48, 54, 56, 58, 62, 64, 66, 68, 70, 72, 74, 78]], nodes: [[26, 29], [28, 29], [40, 29], [50, 29], [73, 25], [78, 25]], curve: "M25 51Q28 38 36 35Q56 35 68 28Q73 24 80 27Q88 33 98 33" },
  { x: 374, y: 5, heat: [34, 90, [38, 41, 43, 47, 52, 54, 56, 60, 67, 72]], nodes: [[35, 33], [38, 29], [42, 28], [61, 26], [72, 25], [80, 25]], curve: "M32 51L37 32Q40 27 48 27Q68 22 78 22Q86 24 98 28" },
  { x: 174, y: 88, heat: [14, 80, [15, 16, 17, 18, 22, 23, 24, 25, 29, 33]], nodes: [[8, 28], [24, 31], [38, 29], [49, 29], [60, 29], [71, 28], [88, 28]], curve: "M0 28Q12 29 20 31Q30 29 40 29H98" },
  { x: 332, y: 88, heat: [16, 88, [25, 31, 33, 35, 38, 42, 45, 50, 58, 60, 62, 64, 67, 70]], nodes: [[23, 28], [28, 28], [38, 28], [49, 28], [60, 28], [70, 28]], curve: "M22 51Q26 32 36 29H70Q80 32 86 44Q90 50 98 50" },
];

const EqWindow = ({ x, y, heat, nodes, curve, index }) => (
  <EqFrame $x={x} $y={y}>
    <EqTitle><span>▸ ✿ Fruity parametric EQ 2 (MASTER)</span><span>Presets ◂ ▸ − □ ×</span></EqTitle>
    <EqPanel>
      <EqSvg viewBox="0 0 98 55" preserveAspectRatio="none">
        <defs>
          <linearGradient id={`heat${index}`}>
            <stop offset="0" stopColor="#6a3a6a" stopOpacity="0.2" />
            <stop offset="0.3" stopColor="#783854" stopOpacity="0.75" />
            <stop offset="0.7" stopColor="#683c62" stopOpacity="0.75" />
            <stop offset="1" stopColor="#4a4a78" stopOpacity="0.15" />
          </linearGradient>
        </defs>
        <rect width="98" height="55" fill="#233640" />
        {[...Array(17)].map((_, i) => <path key={i} d={`M${i * 6} 6V52`} stroke="#1b2b34" strokeWidth="0.5" />)}
        {[...Array(9)].map((_, i) => <path key={i} d={`M0 ${8 + i * 5}H98`} stroke="#1b2b34" strokeWidth="0.5" />)}
        {heat && <rect x={heat[0]} y="6" width={heat[1] - heat[0]} height="46" fill={`url(#heat${index})`} />}
        {heat && heat[2].map((h) => <path key={h} d={`M${h} 6V52`} stroke="#b83856" strokeWidth="1.200" opacity="0.65" />)}
        <path d="M0 1.500H98M0 4.500H98M0 53.500H98" stroke="#4b5b62" strokeWidth="2" strokeDasharray="9 1" />
        <path d={curve} stroke="#c6d0d6" strokeWidth="0.8" fill="none" />
        {nodes.map(([nx, ny], i) => (
          <rect key={i} x={nx - 1} y={ny - 2} width="3" height="4" fill="none" stroke={bands[i]} strokeWidth="0.7" />
        ))}
      </EqSvg>
      <EqSide viewBox="0 0 46 68" preserveAspectRatio="none">
        <path d="M2 5V52M6 5V52" stroke="#4a5b63" strokeWidth="0.8" />
        <circle cx="6" cy="28" r="1.200" fill="none" stroke="#c5ced2" strokeWidth="0.7" />
        {bands.map((c, i) => (
          <g key={c}>
            <rect x={9.5 + i * 5.200} y="0" width="4" height="6" fill={c} />
            <path d={`M${11.5 + i * 5.200} 2V4`} stroke="#223" strokeWidth="0.8" />
            <path d={`M${11.5 + i * 5.200} 8V52`} stroke="#40525b" strokeWidth="1.500" />
            <circle cx={11.5 + i * 5.200} cy={i === 1 ? 31 : 28} r="1.200" fill="#223038" stroke="#c5ced2" strokeWidth="0.7" />
            <path d={`M${10 + i * 5.200} 59Q${10 + i * 5.200} 56 ${13 + i * 5.200} 57M${10 + i * 5.200} 65Q${10 + i * 5.200} 61 ${13 + i * 5.200} 63`} stroke={c} fill="none" />
          </g>
        ))}
      </EqSide>
      <EqFoot>
        <span>PARAMETRIC <b>EQ</b> 2</span>
        <svg width="54" height="8" fill="#3a4a52">
          <circle cx="4" cy="4" r="2" />
          <circle cx="13" cy="4" r="3" fill="#7c8a90" />
          <circle cx="23" cy="4" r="2" />
          <path d="M30 2H40V6H30ZM44 2H53V6H44Z" />
        </svg>
      </EqFoot>
    </EqPanel>
  </EqFrame>
);

const Taskbar = styled.div`
  position: absolute;
  left: 0;
  right: 0;
  bottom: 0;
  height: 10px;
  display: flex;
  justify-content: flex-end;
  align-items: center;
  gap: 4px;
  padding-right: 5px;
  background: linear-gradient(#1c2022, #050505 20%);
  border-bottom: 1px solid #555;
  font-size: 4px;
  line-height: 4px;
  text-align: center;
  color: #c9cfd0;
`;

const Tray = styled.i`
  width: 3px;
  height: 3px;
  background: ${(p) => p.$c};
`;

const EqDesktop = () => (
  <Desktop>
    <Rack>
      <svg width="14" height="180">
        {[...Array(13)].map((_, i) => (
          <path key={i} d={`M1 ${6 + i * 7.500}H4M5 ${6 + i * 7.500}H8`} stroke="#75484c" strokeWidth="4" />
        ))}
        <rect y="104" width="14" height="8" fill="#20282c" />
        <rect y="116" width="13" height="58" fill="#1c2123" />
        <rect y="122" width="3" height="7" fill="#d8dcdc" />
        <rect y="145" width="3" height="8" fill="#b84848" />
        <path d="M4 126H9M4 134H9M4 142H9M4 150H11" stroke="#8a9498" />
      </svg>
    </Rack>
    {eqs.map((eq, i) => <EqWindow key={i} index={i} {...eq} />)}
    <Taskbar>
      {["#ccc", "#aaa", "#5c8", "#1c3", "#8a6", "#c33", "#db4", "#c88", "#888", "#aaa", "#ddd"].map((c, i) => <Tray key={i} $c={c} />)}
      <span>13:59<br />11/06/2018</span>
    </Taskbar>
  </Desktop>
);

/* ---------- page ---------- */

const Columns = styled.div`
  display: grid;
  grid-template-columns: minmax(0, 519fr) minmax(0, 184fr);
  column-gap: 5px;
  margin: 1px 1px 0 0;
`;

const App = () => (
  <Page>
    <GlobalStyle />
    <figure>
      <PlaylistWindow />
      <Caption $top={7}>
        <Line $fill><i>a</i> Example of the looped timeline used during bass mixing process. The bass notes (blue), the sub</Line>
        <Line>stem (red), and the drum stem (green) are highlighted.</Line>
      </Caption>
    </figure>
    <Columns>
      <div>
        <figure>
          <FullMixer />
          <Caption $top={6} $line={20} $center><i>b</i> Mixer, note the use of colour coding.</Caption>
        </figure>
        <figure>
          <EqDesktop />
          <Caption $top={4} $center><i>c</i> EQ panels, all pertain to different bass track settings.</Caption>
        </figure>
      </div>
      <figure>
        <BassMixer />
        <Caption $top={4} $size={17}>
          <Line $fill><i>d</i> Mixer tracks of bass sig-</Line>
          <Line $fill>nals, image processed to</Line>
          <Line>remove many tracks</Line>
        </Caption>
      </figure>
    </Columns>
  </Page>
);

export default App;
